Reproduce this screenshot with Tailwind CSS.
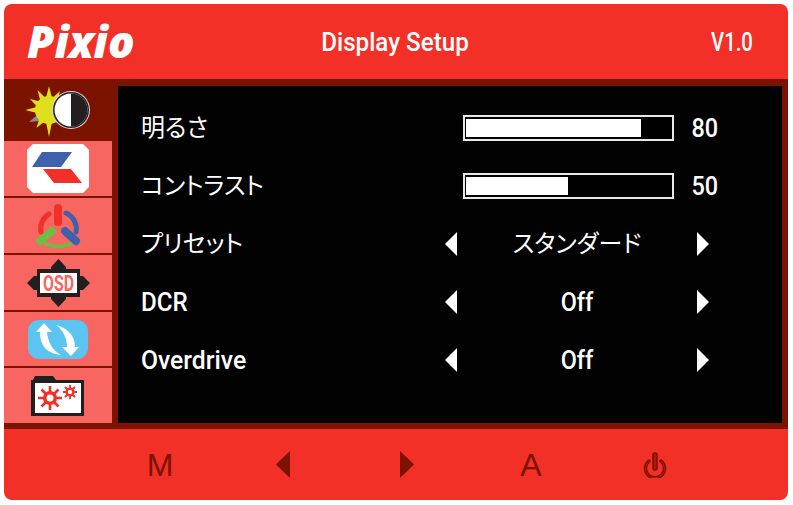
<!DOCTYPE html>
<html lang="ja">
<head>
  <meta charset="UTF-8" />
  <title>Display Setup</title>
  <script src="https://cdn.jsdelivr.net/npm/@tailwindcss/browser@4"></script>
</head>
<body class="bg-white w-[793px] h-[505px] overflow-hidden font-['Roboto','Noto_Sans_CJK_JP',sans-serif]">
  <div class="ml-1 mt-1 w-[784px] h-[496px] rounded-lg overflow-hidden bg-[#f23027] flex flex-col">
    <!-- header -->
    <div class="h-[75px] flex items-center text-white shrink-0">
      <div class="w-[140px] pl-[23px] pb-0.5 font-['Open_Sans',sans-serif] italic font-extrabold text-[44px] leading-none">Pixio</div>
      <div class="w-[502px] pt-0.5 text-center text-[26px] font-medium scale-x-[.93]">Display Setup</div>
      <div class="ml-[46px] w-[80px] pt-0.5 text-center text-[26px] font-medium scale-x-[.78]">V1.0</div>
    </div>

    <!-- middle -->
    <div class="h-[350px] bg-[#7c1200] flex shrink-0">
      <!-- sidebar -->
      <div class="w-[108px] flex flex-col shrink-0">
        <div class="h-[62px] flex justify-center pt-[2px]">
          <svg width="64" height="56" viewBox="0 -4 64 56">
            <path d="M3 37L11 30L14 36Z" fill="#8a8a8a" />
            <g fill="#dde01a">
              <circle cx="23" cy="25" r="14" />
              <path d="M20 13L23 1L26 13Z" />
              <path d="M20 13L23 3L26 13Z" transform="rotate(30 23 25)" />
              <path d="M20 13L23 3L26 13Z" transform="rotate(65 23 25)" />
              <path d="M20 13L23 3L26 13Z" transform="rotate(140 23 25)" />
              <path d="M20 13L23 -2L26 13Z" transform="rotate(180 23 25)" />
              <path d="M20 13L23 3L26 13Z" transform="rotate(215 23 25)" />
              <path d="M20 13L23 1L26 13Z" transform="rotate(270 23 25)" />
              <path d="M20 13L23 3L26 13Z" transform="rotate(300 23 25)" />
              <path d="M20 13L23 2L26 13Z" transform="rotate(330 23 25)" />
            </g>
            <circle cx="45" cy="25" r="19" fill="#d8d8d8" />
            <circle cx="45" cy="25" r="18" fill="#231f20" />
            <circle cx="45" cy="25" r="16.500" fill="#fff" />
            <path d="M45 8.500A16.500 16.500 0 0 1 45 41.500Z" fill="#231f20" />
          </svg>
        </div>

        <div class="h-[55px] bg-[#f76661] flex items-center justify-center">
          <svg width="62" height="49" viewBox="0 0 62 49">
            <path d="M6 0H56L62 6V43L56 49H6L0 43V6Z" fill="#fff" />
            <path d="M15 8H45L34 23H5Z" fill="#3f60ad" />
            <path d="M16 25H44L55 39H27Z" fill="#f23027" />
          </svg>
        </div>

        <div class="mt-[2px] h-[55px] bg-[#f76661] flex items-center justify-center">
          <svg width="48" height="48" viewBox="0 0 48 48" fill="none" stroke-linecap="round">
            <path d="M24 6V20" stroke="#f23027" stroke-width="8" />
            <path d="M15 12A17 17 0 0 0 7 30" stroke="#f23027" stroke-width="5" />
            <path d="M32 11A17 17 0 0 1 42 30" stroke="#3f60ad" stroke-width="5" />
            <path d="M31 29L42 39" stroke="#3f60ad" stroke-width="8" />
            <path d="M18 29L6 39" stroke="#6cbe45" stroke-width="8" />
            <path d="M12 42Q24 47 36 42" stroke="#6cbe45" stroke-width="4" />
          </svg>
        </div>

        <div class="mt-[2px] h-[55px] bg-[#f76661] flex items-center justify-center">
          <svg width="64" height="48" viewBox="0 0 64 48">
            <path d="M32.500 0L40 8V11H25V8Z M32.500 48L40 40V37H25V40Z M1 24L8 17H12V31H8Z M64 24L57 17H53V31H57Z" fill="#231f20" />
            <rect x="11" y="10" width="43" height="28" fill="#231f20" />
            <rect x="14" y="14" width="37" height="20" fill="#fff" />
            <text x="32.500" y="32" text-anchor="middle" font-family="Roboto" font-weight="700" font-size="22" fill="#f76661" textLength="31" lengthAdjust="spacingAndGlyphs">OSD</text>
          </svg>
        </div>

        <div class="mt-[2px] h-[54px] bg-[#f76661] flex items-center justify-center">
          <svg width="60" height="39" viewBox="0 0 60 39">
            <rect width="60" height="39" rx="11" fill="#5cc4f0" />
            <path d="M16 3L8 12H12C12 24 17 33 33 35C24 30 20 22 19 12H24Z" fill="#fff" />
            <path d="M28 5C40 8 47 16 47 27H51L43 36L34 27H39C39 18 35 10 28 5Z" fill="#fff" />
          </svg>
        </div>

        <div class="mt-[2px] h-[55px] bg-[#f76661] flex items-center justify-center">
          <svg width="54" height="42" viewBox="0 0 54 42">
            <path d="M2 5L4 1H22L25 5Z" fill="#231f20" />
            <rect x="0" y="5" width="53" height="36" fill="#231f20" />
            <rect x="4" y="8" width="46" height="30" fill="#fff" />
            <g stroke="#f23027" stroke-width="2.600">
              <path d="M19 11V35M7 23H31M10.500 14.500L27.500 31.500M27.500 14.500L10.500 31.500" />
              <path d="M39 10V24M32 17H46M34 12L44 22M44 12L34 22" stroke-width="1.800" />
            </g>
            <circle cx="19" cy="23" r="7" fill="#f23027" />
            <circle cx="19" cy="23" r="3.500" fill="#fff" />
            <circle cx="39" cy="17" r="4.500" fill="#f23027" />
            <circle cx="39" cy="17" r="2.200" fill="#fff" />
          </svg>
        </div>
      </div>

      <!-- panel -->
      <div class="ml-[6px] mt-[7px] w-[664px] h-[337px] bg-[#020202] text-white text-[26px] font-medium flex flex-col pt-[13px]">
        <div class="h-[58px] flex items-center">
          <div class="w-[345px] pl-[23px] text-[24px] font-normal [font-feature-settings:'palt']">明るさ</div>
          <div class="w-[211px] h-[26px] border-2 border-[#e8e8e8] px-px py-[2px] bg-black"><div class="h-full bg-white w-[175px]"></div></div>
          <div class="ml-4 scale-x-90">80</div>
        </div>
        <div class="h-[58px] flex items-center">
          <div class="w-[345px] pl-[23px] text-[24px] font-normal [font-feature-settings:'palt']">コントラスト</div>
          <div class="w-[211px] h-[26px] border-2 border-[#e8e8e8] px-px py-[2px] bg-black"><div class="h-full bg-white w-[102px]"></div></div>
          <div class="ml-4 scale-x-90">50</div>
        </div>
        <div class="h-[58px] flex items-center">
          <div class="w-[327px] pl-[23px] text-[24px] font-normal [font-feature-settings:'palt']">プリセット</div>
          <svg width="12" height="24" viewBox="0 0 12 24"><path d="M12 0V24L0 12Z" fill="#fff" /></svg>
          <div class="w-[240px] text-center text-[24px] font-normal [font-feature-settings:'palt']">スタンダード</div>
          <svg width="12" height="24" viewBox="0 0 12 24"><path d="M0 0V24L12 12Z" fill="#fff" /></svg>
        </div>
        <div class="h-[58px] flex items-center">
          <div class="w-[327px] pl-[23px]"><span class="inline-block origin-left scale-x-[.93]">DCR</span></div>
          <svg width="12" height="24" viewBox="0 0 12 24"><path d="M12 0V24L0 12Z" fill="#fff" /></svg>
          <div class="w-[240px] text-center scale-x-90">Off</div>
          <svg width="12" height="24" viewBox="0 0 12 24"><path d="M0 0V24L12 12Z" fill="#fff" /></svg>
        </div>
        <div class="h-[58px] flex items-center">
          <div class="w-[327px] pl-[23px]"><span class="inline-block origin-left scale-x-95">Overdrive</span></div>
          <svg width="12" height="24" viewBox="0 0 12 24"><path d="M12 0V24L0 12Z" fill="#fff" /></svg>
          <div class="w-[240px] text-center scale-x-90">Off</div>
          <svg width="12" height="24" viewBox="0 0 12 24"><path d="M0 0V24L12 12Z" fill="#fff" /></svg>
        </div>
      </div>
    </div>

    <!-- footer buttons -->
    <div class="flex-1 flex items-center text-[#7c1200] text-[32px] font-['Liberation_Sans',sans-serif]">
      <div class="w-[313px] flex items-center">
        <span class="ml-[143px] w-[26px] flex justify-center leading-none">M</span>
        <svg class="ml-[103px]" width="14" height="27" viewBox="0 0 14 27"><path d="M14 0V27L0 13.500Z" fill="#7c1200" /></svg>
      </div>
      <svg class="ml-[83px]" width="14" height="27" viewBox="0 0 14 27"><path d="M0 0V27L14 13.500Z" fill="#7c1200" /></svg>
      <span class="ml-[107px] w-[20px] flex justify-center leading-none">A</span>
      <svg class="ml-[102px]" width="24" height="26" viewBox="0 0 24 26" fill="none" stroke-linecap="round">
        <path d="M6 9A9.500 9.500 0 1 0 18 9" stroke="#7c1200" stroke-width="3.500" />
        <path d="M6 9A9.500 9.500 0 1 0 18 9" stroke="#b51d10" stroke-width="1" />
        <rect x="10" y="1" width="4" height="17" rx="2" fill="#a81a0c" stroke="#7c1200" stroke-width="1.500" />
      </svg>
    </div>
  </div>
</body>
</html>
